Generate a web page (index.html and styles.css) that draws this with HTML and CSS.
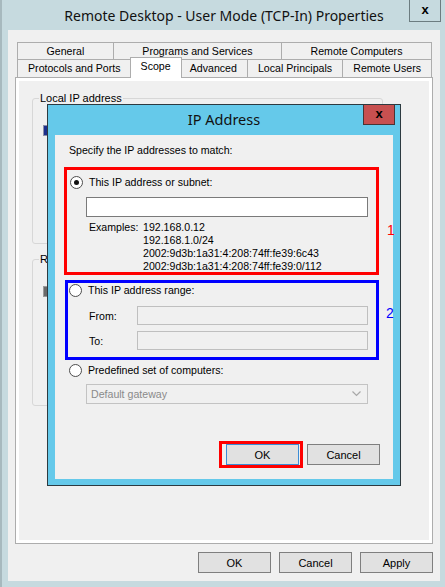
FILE: index.html
```html
<!DOCTYPE html>
<html>
<head>
<meta charset="utf-8">
<title>Remote Desktop - User Mode (TCP-In) Properties</title>
<link rel="stylesheet" href="styles.css">
</head>
<body>
<div class="window">
  <div class="titlebar">
    <div class="title">Remote Desktop - User Mode (TCP-In) Properties</div>
    <div class="close">x</div>
  </div>
  <div class="client">
    <div class="tabs">
      <div class="tabrow r1">
        <div class="tab">General</div>
        <div class="tab">Programs and Services</div>
        <div class="tab">Remote Computers</div>
      </div>
      <div class="tabrow r2">
        <div class="tab">Protocols and Ports</div>
        <div class="tab sel">Scope</div>
        <div class="tab">Advanced</div>
        <div class="tab">Local Principals</div>
        <div class="tab">Remote Users</div>
      </div>
    </div>
    <div class="panel">
      <div class="page">
        <fieldset class="group g1">
          <legend>Local IP address</legend>
          <div class="gicon blue"></div>
        </fieldset>
        <fieldset class="group g2">
          <legend>Remote IP address</legend>
          <div class="gicon grey"></div>
        </fieldset>
      </div>
    </div>
    <div class="buttons">
      <button class="btn">OK</button>
      <button class="btn">Cancel</button>
      <button class="btn">Apply</button>
    </div>
  </div>

  <div class="dialog">
    <div class="dtitlebar">
      <div class="dtitle">IP Address</div>
      <div class="dclose">x</div>
    </div>
    <div class="dclient">
      <div class="intro">Specify the IP addresses to match:</div>

      <div class="annrow first">
        <div class="box red">
          <div class="radiorow"><span class="radio checked"></span><span class="rlabel">This IP address or subnet:</span></div>
          <div class="textbox"></div>
          <div class="examples">
            <span>Examples:</span><span>192.168.0.12</span>
            <span></span><span>192.168.1.0/24</span>
            <span></span><span>2002:9d3b:1a31:4:208:74ff:fe39:6c43</span>
            <span></span><span>2002:9d3b:1a31:4:208:74ff:fe39:0/112</span>
          </div>
        </div>
        <div class="ann ann1">1</div>
      </div>

      <div class="annrow second">
        <div class="box blue">
          <div class="radiorow"><span class="radio"></span><span class="rlabel">This IP address range:</span></div>
          <div class="range">
            <span>From:</span><div class="textbox disabled"></div>
            <span>To:</span><div class="textbox disabled"></div>
          </div>
        </div>
        <div class="ann ann2">2</div>
      </div>

      <div class="radiorow predef"><span class="radio"></span><span class="rlabel">Predefined set of computers:</span></div>
      <div class="combo">
        <span>Default gateway</span>
        <svg width="9" height="6" viewBox="0 0 9 6"><path d="M0.5 0.5 L4.5 4.5 L8.5 0.5" fill="none" stroke="#a8a8a8" stroke-width="1.2"/></svg>
      </div>

      <div class="dbuttons">
        <div class="okmark"><button class="btn default">OK</button></div>
        <button class="btn">Cancel</button>
      </div>
    </div>
  </div>
</div>
</body>
</html>
```

FILE: styles.css
```css
* { box-sizing: border-box; }
html, body { margin: 0; padding: 0; }
body {
  width: 445px;
  height: 587px;
  overflow: hidden;
  font-family: "Liberation Sans", Arial, sans-serif;
  font-size: 10.6px;
  color: #000;
  background: #c6dadf;
}
.window {
  position: relative;
  width: 445px;
  height: 587px;
  background: #c6dadf;
  border-left: 2px solid #a7b9be;
  padding: 0 5px 6px 6px;
  display: flex;
  flex-direction: column;
}
.titlebar {
  height: 30px;
  display: grid;
  grid-template-columns: 1fr auto 1fr;
  align-items: start;
}
.title {
  grid-column: 2;
  font-family: "Noto Sans", "Open Sans", sans-serif;
  font-size: 14px;
  line-height: 20px;
  margin-top: 6px;
  color: #111;
  white-space: nowrap;
}
.close {
  grid-column: 3;
  justify-self: end;
  width: 32px;
  height: 22px;
  margin-right: -1px;
  border: 1px solid #6c7c80;
  border-top: none;
  background: #c6dadf;
  font-family: "Liberation Sans", Arial, sans-serif;
  font-weight: bold;
  font-size: 13px;
  line-height: 19px;
  text-align: center;
}
.client {
  flex: 1;
  background: #f0f0f0;
  padding: 12px 7px 8px 7px;
  display: flex;
  flex-direction: column;
}
.tabs { display: flex; flex-direction: column; }
.tabrow {
  display: flex;
  height: 18px;
  margin: 0 1px 0 2px;
}
.r2 { margin-top: -1px; }
.tab {
  flex: 1 1 auto;
  border: 1px solid #adadad;
  margin-left: -1px;
  background: #f0f0f0;
  text-align: center;
  line-height: 16px;
  white-space: nowrap;
}
.tab:first-child { margin-left: 0; }
.r2 .tab { border-bottom: none; line-height: 17px; }
.tab.sel {
  position: relative;
  z-index: 1;
  background: #fff;
  margin: -2px -2px -1px -2px;
  line-height: 16px;
  height: 21px;
}
.panel {
  flex: 1;
  border: 1px solid #adadad;
  background: #fff;
  padding: 3px;
  display: flex;
}
.page {
  flex: 1;
  background: #f0f0f0;
  padding: 11px 0 0 13px;
}
.group {
  margin: 0;
  padding: 0;
  width: 351px;
  border: 1px solid #d7d7d7;
  border-radius: 3px;
}
.group legend {
  padding: 0 1px;
  margin-left: 6px;
  line-height: 13px;
  font-size: 11px;
}
.g1 { height: 152px; }
.g2 { height: 153px; margin-top: 9px; }
.gicon {
  width: 12px;
  height: 11px;
  margin-left: 10px;
}
.g1 .gicon { margin-top: 20px; }
.g2 .gicon { margin-top: 20px; }
.gicon.blue { background: #1c2f8c; border: 1px solid #8a8fa8; }
.gicon.grey { background: #6a6a6a; border: 1px solid #9a9a9a; }

.buttons {
  display: flex;
  justify-content: flex-end;
  gap: 8px;
  margin-top: 8px;
  height: 21px;
}
.btn {
  width: 73px;
  height: 21px;
  border: 1px solid #7f7f7f;
  background: #e1e1e1;
  font-family: "Liberation Sans", Arial, sans-serif;
  font-size: 11px;
  color: #000;
  padding: 0;
  margin: 0;
}
.btn.default { border-color: #3c8dd6; }

/* modal dialog lying over the property sheet */
.dialog {
  position: absolute;
  left: 45px;
  top: 104px;
  width: 354px;
  height: 382px;
  border: 1px solid #2d3a40;
  background: #65c9ea;
  padding: 0 7px 6px 7px;
  display: flex;
  flex-direction: column;
}
.dtitlebar {
  height: 30px;
  margin: 0 -7px;
  display: grid;
  grid-template-columns: 1fr auto 1fr;
  align-items: start;
}
.dtitle {
  grid-column: 2;
  font-family: "Noto Sans", "Open Sans", sans-serif;
  font-size: 14.5px;
  line-height: 20px;
  margin-top: 4px;
  color: #111;
}
.dclose {
  grid-column: 3;
  justify-self: end;
  width: 32px;
  height: 20px;
  margin-right: 5px;
  background: #c75050;
  border: 1px solid #4a3434;
  border-top: none;
  font-weight: bold;
  font-size: 13px;
  line-height: 17px;
  text-align: center;
  color: #000;
}
.dclient {
  flex: 1;
  background: #f0f0f0;
  padding: 9px 0 0 9px;
  display: flex;
  flex-direction: column;
  align-items: flex-start;
}
.intro { margin-left: 5px; line-height: 13px; }
.annrow { display: flex; align-items: flex-start; }
.annrow.first { margin-top: 10px; }
.annrow.second { margin-top: 5px; margin-left: 1px; }
.box { border: 3px solid; }
.box.red {
  border-color: #ff0000;
  width: 315px;
  height: 108px;
  padding: 6px 0 0 3px;
}
.box.blue {
  border-color: #0000ff;
  width: 314px;
  height: 80px;
  padding: 1px 0 0 1px;
}
.ann {
  font-size: 14px;
  line-height: 16px;
  margin-left: 8px;
}
.ann1 { color: #ff0000; margin-top: 55px; }
.ann2 { color: #0000ff; margin-top: 25px; margin-left: 7px; }
.radiorow {
  display: flex;
  align-items: center;
  height: 13px;
}
.radio {
  width: 13px;
  height: 13px;
  border-radius: 50%;
  border: 1px solid #4d4d4d;
  background: #fff;
  display: flex;
  align-items: center;
  justify-content: center;
  flex: none;
}
.radio.checked::after {
  content: "";
  width: 5px;
  height: 5px;
  border-radius: 50%;
  background: #111;
}
.rlabel { margin-left: 6px; line-height: 13px; white-space: nowrap; }
.textbox {
  width: 282px;
  height: 20px;
  margin: 8px 0 0 16px;
  border: 1px solid #7a7a7a;
  background: #fff;
}
.textbox.disabled {
  margin: 0;
  width: 231px;
  height: 19px;
  border-color: #bfbfbf;
  background: #f0f0f0;
}
.examples {
  display: grid;
  grid-template-columns: 54px auto;
  margin: 4px 0 0 19px;
  line-height: 13px;
  white-space: nowrap;
}
.range {
  display: grid;
  grid-template-columns: 48px 231px;
  row-gap: 6px;
  align-items: center;
  margin: 9px 0 0 20px;
}
.radiorow.predef { margin: 4px 0 0 5px; }
.combo {
  width: 282px;
  height: 20px;
  margin: 7px 0 0 22px;
  border: 1px solid #c3c3c3;
  background: #f0f0f0;
  color: #8a8a8a;
  display: flex;
  align-items: center;
  justify-content: space-between;
  padding: 0 6px 0 4px;
}
.dbuttons {
  align-self: flex-end;
  margin: 37px 13px 0 0;
  display: flex;
  align-items: center;
  gap: 4px;
}
.okmark {
  border: 3px solid #ff0000;
  padding: 0 1px 0 4px;
  display: flex;
}
```
